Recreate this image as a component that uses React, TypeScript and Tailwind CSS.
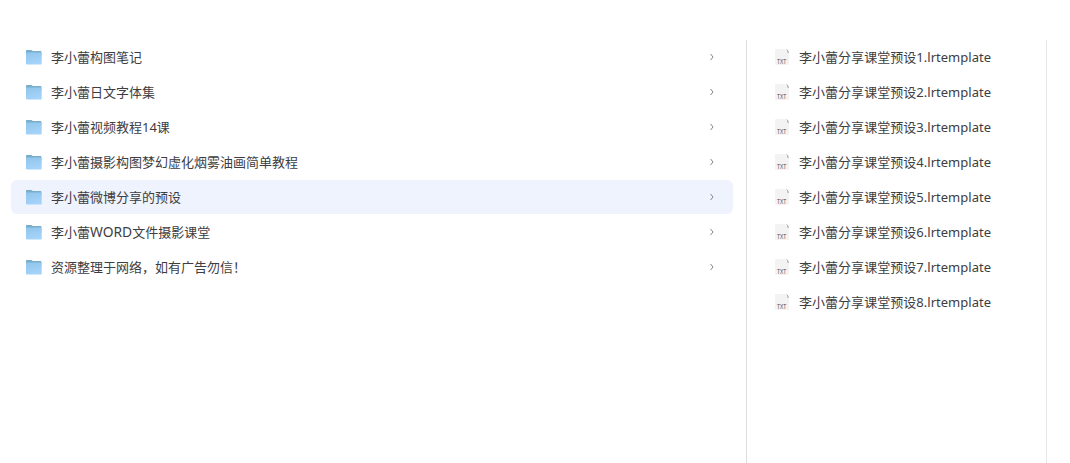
import type { ReactNode } from 'react'

type Folder = {
  id: string
  label: ReactNode
  selected?: boolean
}

const folders: Folder[] = [
  { id: 'notes', label: '李小蕾构图笔记' },
  { id: 'fonts', label: '李小蕾日文字体集' },
  { id: 'videos', label: '李小蕾视频教程14课' },
  { id: 'painting', label: '李小蕾摄影构图梦幻虚化烟雾油画简单教程' },
  { id: 'presets', label: '李小蕾微博分享的预设', selected: true },
  {
    id: 'word',
    label: (
      <>
        李小蕾<span className="text-[13.8px] leading-none">WORD</span>文件摄影课堂
      </>
    ),
  },
  { id: 'notice', label: '资源整理于网络，如有广告勿信！' },
]

const files = [1, 2, 3, 4, 5, 6, 7, 8].map((n) => `李小蕾分享课堂预设${n}.lrtemplate`)

function FolderIcon() {
  return (
    <svg width="18" height="16" viewBox="0 0 18 16" className="shrink-0">
      <defs>
        <linearGradient id="folder-front" x1="0" y1="0" x2="0.3" y2="1">
          <stop offset="0" stopColor="#8fc5ea" />
          <stop offset="1" stopColor="#a5d3fa" />
        </linearGradient>
      </defs>
      <path d="M1 1.6Q1 .9 1.8.9H6.4L7.8 1.9H15.6Q16.4 1.9 16.4 2.7V6H1Z" fill="#78aeca" />
      <path d="M1 3.4H15.8Q16.7 3.4 16.7 4.2V14.8Q16.7 15.6 15.8 15.6H1.9Q1 15.6 1 14.8Z" fill="url(#folder-front)" />
    </svg>
  )
}

function TxtIcon() {
  return (
    <svg width="16" height="18" viewBox="0 0 16 18" className="shrink-0">
      <path d="M2 1H11L15 5V16Q15 17 14 17H2Q1 17 1 16V2Q1 1 2 1Z" fill="#f3f3f4" />
      <path d="M12.6 1.6Q14.2 2 14.2 5" fill="none" stroke="#97979c" strokeWidth="1" />
      <text
        x="2.9"
        y="15.6"
        textLength="9.4"
        lengthAdjust="spacingAndGlyphs"
        fontSize="6.5"
        fontFamily="Liberation Sans, sans-serif"
        fill="#4c4c52"
      >
        TXT
      </text>
    </svg>
  )
}

function Chevron() {
  return (
    <svg width="6" height="8" viewBox="0 0 6 8" className="shrink-0">
      <path d="M1.6 1L4 4L1.6 7" fill="none" stroke="#85858c" strokeWidth="1" />
    </svg>
  )
}

export default function App() {
  return (
    <main className="flex h-[463px] w-[1070px] overflow-hidden bg-white pt-10 font-['Noto_Sans','Noto_Sans_CJK_SC',sans-serif] text-[13px] text-[#3d3d42]">
      <ul className="flex w-[747px] flex-col gap-px border-r border-[#dedee0] pr-[13px] pl-[11px]">
        {folders.map((folder) => (
          <li
            key={folder.id}
            className={`flex h-[34px] items-center rounded-md pr-[18px] pl-3.5 ${folder.selected ? 'bg-[#eff3fe]' : ''}`}
          >
            <FolderIcon />
            <span className="ml-2 flex-1 pt-0.5 whitespace-nowrap">{folder.label}</span>
            <Chevron />
          </li>
        ))}
      </ul>

      <ul className="flex w-[300px] flex-col gap-px border-r border-[#e6e6e8] pl-[27px]">
        {files.map((name) => (
          <li key={name} className="flex h-[34px] items-center gap-[9px]">
            <TxtIcon />
            <span className="pt-0.5 tracking-[0.03px] whitespace-nowrap">{name}</span>
          </li>
        ))}
      </ul>
    </main>
  )
}
